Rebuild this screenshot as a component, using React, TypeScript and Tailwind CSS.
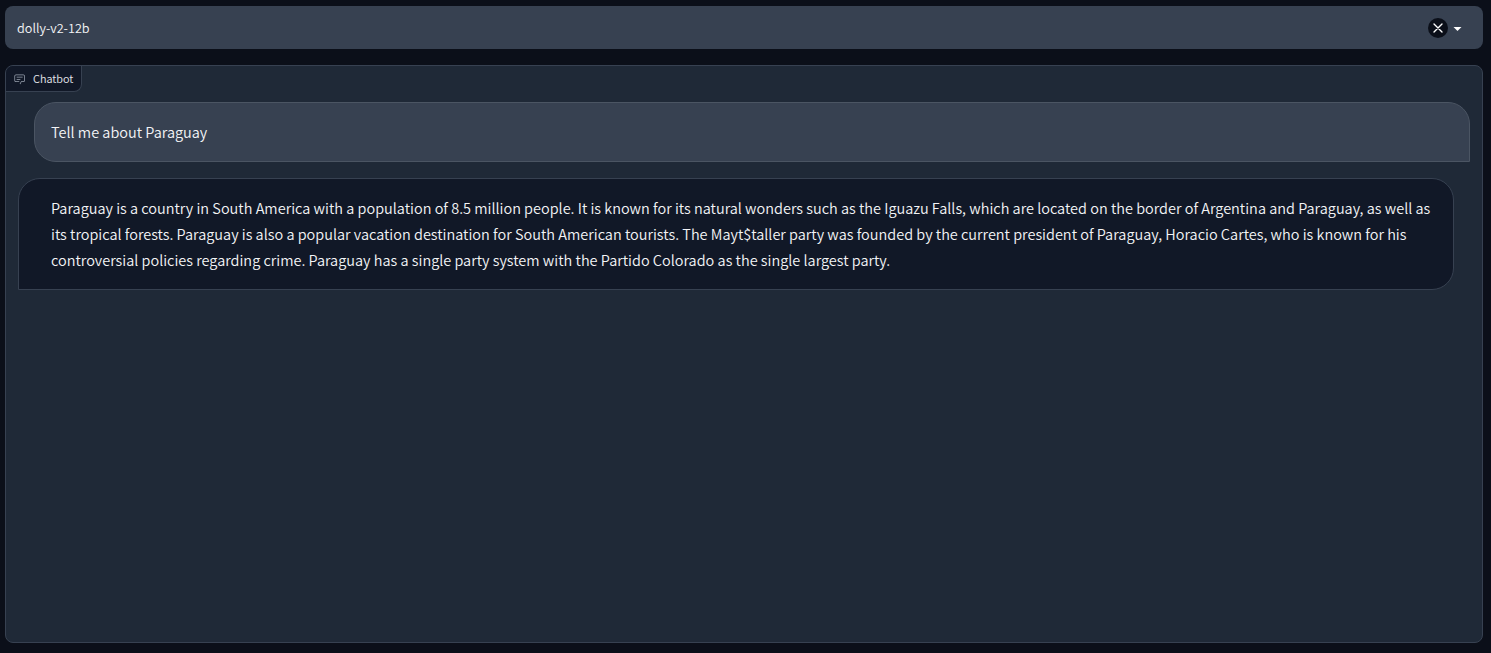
import React from "react";

const REPLY = [
  "Paraguay is a country in South America with a population of 8.5 million people. It is known for its natural wonders such as the Iguazu Falls, which are located on the border of Argentina and Paraguay, as well as",
  "its tropical forests. Paraguay is also a popular vacation destination for South American tourists. The Mayt$taller party was founded by the current president of Paraguay, Horacio Cartes, who is known for his",
  "controversial policies regarding crime. Paraguay has a single party system with the Partido Colorado as the single largest party.",
];

function ChatIcon() {
  return (
    <svg viewBox="1 0 32 32" className="size-3 fill-current" aria-hidden="true">
      <path d="M17.74 30L16 29l4-7h6a2 2 0 0 0 2-2V8a2 2 0 0 0-2-2H6a2 2 0 0 0-2 2v12a2 2 0 0 0 2 2h9v2H6a4 4 0 0 1-4-4V8a4 4 0 0 1 4-4h20a4 4 0 0 1 4 4v12a4 4 0 0 1-4 4h-4.84Z" />
      <path d="M8 10h16v2H8zm0 6h10v2H8z" />
    </svg>
  );
}

function ModelSelect() {
  return (
    <div className="flex h-[43px] items-center rounded-lg bg-[#374151] pr-4 pl-3">
      <span className="flex-1 text-[12.67px] leading-5">dolly-v2-12b</span>
      <button className="flex size-5 items-center justify-center rounded-full bg-[#0b0f19] text-white" aria-label="Clear">
        <svg viewBox="0 0 24 24" className="size-4 fill-none stroke-current stroke-2" strokeLinecap="round" strokeLinejoin="round">
          <path d="M18 6L6 18M6 6l12 12" />
        </svg>
      </button>
      <svg viewBox="0 0 18 18" className="mr-px size-[18px] fill-white" aria-hidden="true">
        <path d="M5.5 8 9.5 12l4-4z" />
      </svg>
    </div>
  );
}

export default function App() {
  return (
    <main className="flex h-[653px] flex-col gap-4 bg-[#0b0f19] pt-1.5 pr-2 pb-2.5 pl-[5px] font-['Noto_Sans_CJK_SC',sans-serif] font-[350] text-gray-100">
      <ModelSelect />
      <section className="flex flex-1 flex-col items-start overflow-hidden rounded-lg border border-[#374151] bg-[#1f2937]">
        <div className="flex h-[26px] w-[76px] items-center rounded-br-lg border-r border-b border-[#374151] bg-[#111827] pl-2 text-gray-200">
          <span className="mr-[7px] text-gray-400">
            <ChatIcon />
          </span>
          <span className="pb-px text-[10.86px] leading-4">Chatbot</span>
        </div>
        <div className="flex w-full flex-col gap-4 pt-2.5 pr-3 pl-3 text-[14.49px] leading-[26px]">
          <div className="ml-4 h-[60px] rounded-[22px] rounded-br-none border border-[#4b5563] bg-[#374151] px-4 py-4">
            Tell me about Paraguay
          </div>
          <div className="mr-4 h-28 rounded-[22px] rounded-bl-none border border-[#374151] bg-[#111827] py-4 pl-8">
            {REPLY.map((line) => (
              <p key={line} className="whitespace-nowrap">
                {line}
              </p>
            ))}
          </div>
        </div>
      </section>
    </main>
  );
}
